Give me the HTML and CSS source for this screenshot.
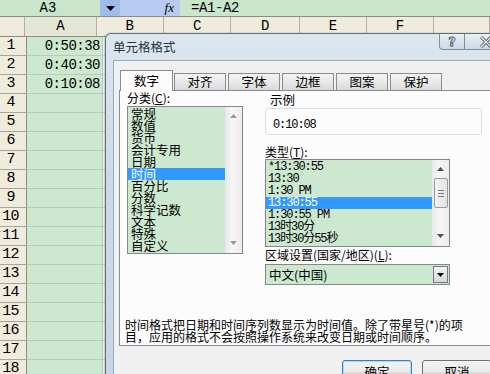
FILE: index.html
```html
<!DOCTYPE html>
<html lang="zh-CN">
  <head>
    <meta charset="UTF-8" />
    <meta name="viewport" content="width=device-width, initial-scale=1.0" />
    <title>单元格格式</title>
    <link rel="stylesheet" href="styles.css">
  </head>
  <body>
    <div class="screen">
      <div class="formula-bar">
        <div class="name-box">A3</div>
        <div class="name-drop">
          <svg width="9" height="5" viewBox="0 0 9 5"><path d="M0 0h9L4.5 5z" fill="#000"/></svg>
        </div>
        <div class="fx-box"><span class="fx">fx</span></div>
        <div class="formula">=A1-A2</div>
      </div>

      <div class="sheet">
        <div class="row head">
          <div class="corner"></div>
          <div class="col-head a">A</div>
          <div class="col-head b">B</div>
          <div class="col-head c">C</div>
          <div class="col-head d">D</div>
          <div class="col-head e">E</div>
          <div class="col-head f">F</div>
          <div class="col-head g"></div>
        </div>
        <div class="row"><div class="row-head">1</div><div class="cell a">0:50:38</div><div class="cell rest"></div></div>
        <div class="row"><div class="row-head">2</div><div class="cell a">0:40:30</div><div class="cell rest"></div></div>
        <div class="row"><div class="row-head">3</div><div class="cell a">0:10:08</div><div class="cell rest"></div></div>
        <div class="row"><div class="row-head">4</div><div class="cell a"></div><div class="cell rest"></div></div>
        <div class="row"><div class="row-head">5</div><div class="cell a"></div><div class="cell rest"></div></div>
        <div class="row"><div class="row-head">6</div><div class="cell a"></div><div class="cell rest"></div></div>
        <div class="row"><div class="row-head">7</div><div class="cell a"></div><div class="cell rest"></div></div>
        <div class="row"><div class="row-head">8</div><div class="cell a"></div><div class="cell rest"></div></div>
        <div class="row"><div class="row-head">9</div><div class="cell a"></div><div class="cell rest"></div></div>
        <div class="row"><div class="row-head">10</div><div class="cell a"></div><div class="cell rest"></div></div>
        <div class="row"><div class="row-head">11</div><div class="cell a"></div><div class="cell rest"></div></div>
        <div class="row"><div class="row-head">12</div><div class="cell a"></div><div class="cell rest"></div></div>
        <div class="row"><div class="row-head">13</div><div class="cell a"></div><div class="cell rest"></div></div>
        <div class="row"><div class="row-head">14</div><div class="cell a"></div><div class="cell rest"></div></div>
        <div class="row"><div class="row-head">15</div><div class="cell a"></div><div class="cell rest"></div></div>
        <div class="row"><div class="row-head">16</div><div class="cell a"></div><div class="cell rest"></div></div>
        <div class="row"><div class="row-head">17</div><div class="cell a"></div><div class="cell rest"></div></div>
        <div class="row"><div class="row-head">18</div><div class="cell a"></div><div class="cell rest"></div></div>
      </div>

      <div class="dialog">
        <div class="titlebar">
          <span class="title">单元格格式</span>
          <div class="cap-btn help">?</div>
          <div class="cap-btn close">
            <svg width="14" height="12" viewBox="0 0 14 12"><path d="M2 1l10 10M12 1L2 11" stroke="#4a5560" stroke-width="3"/><path d="M2 1l10 10M12 1L2 11" stroke="#fff" stroke-width="1.2"/></svg>
          </div>
        </div>

        <div class="dlg-body">
          <div class="tabs">
            <div class="tab active">数字</div>
            <div class="tab">对齐</div>
            <div class="tab">字体</div>
            <div class="tab">边框</div>
            <div class="tab">图案</div>
            <div class="tab">保护</div>
          </div>

          <div class="panel">
            <div class="panel-cols">
              <div class="col-left">
                <div class="label">分类(<u>C</u>):</div>
                <div class="listbox cat">
                  <ul class="items">
                    <li>常规</li>
                    <li>数值</li>
                    <li>货币</li>
                    <li>会计专用</li>
                    <li>日期</li>
                    <li class="sel">时间</li>
                    <li>百分比</li>
                    <li>分数</li>
                    <li>科学记数</li>
                    <li>文本</li>
                    <li>特殊</li>
                    <li>自定义</li>
                  </ul>
                  <div class="vscroll">
                    <svg class="arrow" width="7" height="4" viewBox="0 0 7 4"><path d="M0 4h7L3.5 0z" fill="#9a9a9a"/></svg>
                    <svg class="arrow" width="7" height="4" viewBox="0 0 7 4"><path d="M0 0h7L3.5 4z" fill="#9a9a9a"/></svg>
                  </div>
                </div>
              </div>

              <div class="col-right">
                <div class="sample-title">示例</div>
                <div class="sample">0:10:08</div>

                <div class="label type-label">类型(<u>T</u>):</div>
                <div class="listbox types">
                  <ul class="items mono">
                    <li>*13:30:55</li>
                    <li>13:30</li>
                    <li>1:30 PM</li>
                    <li class="sel">13:30:55</li>
                    <li>1:30:55 PM</li>
                    <li>13时30分</li>
                    <li>13时30分55秒</li>
                  </ul>
                  <div class="vscroll">
                    <svg class="arrow" width="7" height="4" viewBox="0 0 7 4"><path d="M0 4h7L3.5 0z" fill="#505050"/></svg>
                    <div class="thumb"><span></span><span></span><span></span></div>
                    <svg class="arrow" width="7" height="4" viewBox="0 0 7 4"><path d="M0 0h7L3.5 4z" fill="#505050"/></svg>
                  </div>
                </div>

                <div class="label locale-label">区域设置(国家/地区)(<u>L</u>):</div>
                <div class="combo">
                  <span class="combo-value">中文(中国)</span>
                  <div class="combo-btn">
                    <svg width="7" height="4" viewBox="0 0 7 4"><path d="M0 0h7L3.5 4z" fill="#000"/></svg>
                  </div>
                </div>
              </div>
            </div>

            <p class="desc">时间格式把日期和时间序列数显示为时间值。除了带星号(*)的项<br>目，应用的格式不会按照操作系统来改变日期或时间顺序。</p>
          </div>

          <div class="buttons">
            <button class="btn default">确定</button>
            <button class="btn">取消</button>
          </div>
        </div>
      </div>
    </div>
  </body>
</html>
```

FILE: styles.css
```css
body {
  margin: 0;
  background: #fff;
  font-family: "Noto Sans CJK SC", sans-serif;
}
.screen {
  position: relative;
  width: 490px;
  height: 374px;
  overflow: hidden;
}

/* formula bar */
.formula-bar {
  display: flex;
  height: 16px;
  background: #c9e6cb;
  font-family: "Liberation Mono", monospace;
  font-size: 14px;
  line-height: 16px;
}
.name-box {
  width: 100px;
  text-align: center;
  padding-right: 4px;
  box-sizing: border-box;
}
.name-drop {
  width: 20px;
  background: #9fbbea;
  display: flex;
  align-items: center;
  justify-content: center;
}
.fx-box {
  width: 60px;
  background: #b6cbef;
  text-align: right;
  padding-right: 6px;
  box-sizing: border-box;
}
.fx {
  font-family: "Liberation Serif", serif;
  font-style: italic;
  font-size: 13px;
}
.formula {
  flex: 1;
  padding-left: 11px;
  letter-spacing: -0.4px;
}

/* sheet */
.sheet {
  font-family: "Liberation Mono", monospace;
  font-size: 14px;
}
.row {
  display: flex;
  height: 19px;
  box-sizing: border-box;
}
.row.head {
  height: 21px;
  background: #efebdd;
  border-top: 1px solid #8f8c80;
  border-bottom: 1px solid #8f8c80;
}
.corner {
  width: 27px;
  border-right: 1px solid #b4b09e;
  box-sizing: border-box;
}
.col-head {
  border-right: 1px solid #b4b09e;
  box-sizing: border-box;
  text-align: center;
  line-height: 19px;
}
.col-head.a { width: 76px; background: #e4e6d6; }
.col-head.b { width: 72px; }
.col-head.c { width: 72px; }
.col-head.d { width: 73px; }
.col-head.e { width: 72px; }
.col-head.f { width: 71px; }
.col-head.g { width: 60px; }
.row-head {
  width: 27px;
  flex: none;
  background: #efebdd;
  border-right: 1px solid #8f8c80;
  border-bottom: 1px solid #a9a593;
  box-sizing: border-box;
  text-align: center;
  padding-right: 5px;
  line-height: 18px;
  font-size: 15px;
  letter-spacing: -0.8px;
}
.cell {
  border-bottom: 1px solid #b9ccba;
  box-sizing: border-box;
  line-height: 19px;
}
.cell.a {
  width: 76px;
  background: #cce8cf;
  border-right: 1px solid #b9ccba;
  text-align: right;
  padding-right: 2px;
  letter-spacing: -0.5px;
}
.cell.rest {
  flex: 1;
  border-bottom-color: #d0d7e5;
}

/* dialog */
.dialog {
  position: absolute;
  left: 105px;
  top: 33px;
  width: 409px;
  height: 360px;
  box-sizing: border-box;
  border: 1px solid #5e6e7e;
  border-radius: 6px 6px 0 0;
  background: linear-gradient(180deg, #dbe6f0 0%, #ccdae7 40%, #c7d6e4 100%);
  box-shadow: -1px 0 2px rgba(0, 0, 0, 0.25);
  font-size: 12px;
  color: #000;
}
.titlebar {
  display: flex;
  align-items: flex-start;
  height: 26px;
  padding: 0 5px 0 7px;
}
.title {
  line-height: 26px;
  font-size: 12.5px;
  color: #2a323c;
}
.cap-btn {
  height: 16px;
  box-sizing: border-box;
  border: 1px solid #7f8d9c;
  border-top: none;
  background: linear-gradient(180deg, #e9eff5, #cdd9e5);
  display: flex;
  align-items: center;
  justify-content: center;
}
.help {
  margin-left: auto;
  width: 26px;
  border-radius: 0 0 0 4px;
  font-family: "DejaVu Sans", sans-serif;
  font-weight: bold;
  font-size: 13px;
  line-height: 15px;
  color: #e8eef4;
  -webkit-text-stroke: 0.8px #4a5560;
}
.close {
  width: 43px;
  border-left: none;
  border-radius: 0 0 4px 0;
}

.dlg-body {
  margin: 0 6px 0 7px;
  height: 340px;
  border: 1px solid #9aa9b8;
  border-bottom: none;
  background: #f0f0f0;
  padding-top: 9px;
}
.tabs {
  display: flex;
  align-items: flex-end;
  height: 20px;
  margin-left: 6px;
}
.tab {
  width: 52px;
  height: 17px;
  margin-right: 2px;
  box-sizing: border-box;
  border: 1px solid #898c95;
  border-bottom: none;
  background: linear-gradient(180deg, #f3f3f3 0%, #e9e9e9 50%, #d9d9d9 100%);
  text-align: center;
  line-height: 16px;
  font-size: 12.5px;
}
.tab.active {
  width: 53px;
  height: 21px;
  margin-right: 1px;
  margin-bottom: -1px;
  background: #fcfcfc;
  position: relative;
  z-index: 1;
  line-height: 20px;
}
.panel {
  margin-left: 5px;
  height: 256px;
  box-sizing: border-box;
  border: 1px solid #898c95;
  background: #fcfcfc;
}
.panel-cols {
  display: flex;
  padding-left: 7px;
}
.label {
  height: 14px;
  line-height: 14px;
}
.label u {
  text-decoration: underline;
}

/* list boxes */
.listbox {
  display: flex;
  box-sizing: border-box;
  border: 1px solid #828790;
  background: #cce8cf;
}
.items {
  flex: 1;
  list-style: none;
  margin: 0;
  padding: 1px 0 0;
}
.items li {
  height: 12px;
  line-height: 12px;
  padding-left: 3px;
  font-size: 12.5px;
  white-space: nowrap;
}
.items li.sel {
  background: #3399ff;
  color: #fff;
}
.items.mono li {
  font-family: "Liberation Mono", "Noto Sans CJK SC", monospace;
  font-size: 12px;
  letter-spacing: -1.1px;
  padding-left: 2px;
}
.vscroll {
  width: 17px;
  flex: none;
  background: linear-gradient(90deg, #e8e8e8, #f6f6f6 40%, #ececec);
  display: flex;
  flex-direction: column;
  align-items: center;
  justify-content: space-between;
  padding: 7px 0 8px;
  box-sizing: border-box;
}
.cat {
  width: 116px;
  height: 148px;
  margin-top: 1px;
}
.col-left {
  width: 116px;
}
.col-right {
  width: 217px;
  margin-left: 22px;
}
.sample-title {
  position: relative;
  z-index: 1;
  display: inline-block;
  margin: -4px 0 -4px 3px;
  padding: 0 2px;
  height: 13px;
  line-height: 13px;
  background: #fcfcfc;
  font-size: 12.5px;
}
.sample {
  height: 27px;
  box-sizing: border-box;
  border: 1px solid #d5dfe5;
  border-radius: 3px;
  padding: 10px 0 0 7px;
  line-height: 12px;
  font-family: "Liberation Mono", monospace;
  font-size: 12px;
  letter-spacing: -1.1px;
}
.type-label {
  margin-top: 10px;
}
.types {
  width: 185px;
  height: 88px;
}
.types .vscroll {
  justify-content: flex-start;
  padding-top: 7px;
}
.types .vscroll .arrow:last-child {
  margin-top: auto;
}
.thumb {
  width: 14px;
  height: 30px;
  margin-top: 7px;
  box-sizing: border-box;
  border: 1px solid #9b9b9b;
  border-radius: 2px;
  background: linear-gradient(90deg, #f4f4f4, #e2e2e2);
  display: flex;
  flex-direction: column;
  align-items: center;
  justify-content: center;
  gap: 2px;
}
.thumb span {
  width: 6px;
  height: 1px;
  background: #7a7a7a;
}
.locale-label {
  margin-top: 1px;
}
.combo {
  width: 185px;
  height: 21px;
  margin-top: 2px;
  box-sizing: border-box;
  border: 1px solid #828790;
  background: #cce8cf;
  display: flex;
  align-items: center;
}
.combo-value {
  flex: 1;
  padding-left: 3px;
  font-size: 12.5px;
}
.combo-btn {
  width: 15px;
  height: 17px;
  margin-right: 1px;
  box-sizing: border-box;
  border: 1px solid #7a7a7a;
  background: linear-gradient(180deg, #f2f2f2, #d8d8d8);
  display: flex;
  align-items: center;
  justify-content: center;
}
.desc {
  margin: 34px 0 0 5px;
  line-height: 12px;
  font-size: 12px;
  white-space: nowrap;
}

/* buttons */
.buttons {
  display: flex;
  gap: 10px;
  margin: 14px 0 0 228px;
}
.btn {
  width: 70px;
  height: 23px;
  padding: 0;
  border: 1px solid #707070;
  border-radius: 3px;
  background: linear-gradient(180deg, #f2f2f2 0%, #ebebeb 50%, #dddddd 51%, #cfcfcf 100%);
  font-family: "Noto Sans CJK SC", sans-serif;
  font-size: 12.5px;
  color: #000;
}
.btn.default {
  border-color: #3c7fb1;
  box-shadow: inset 0 0 0 1px #a8dcf5;
}
```
